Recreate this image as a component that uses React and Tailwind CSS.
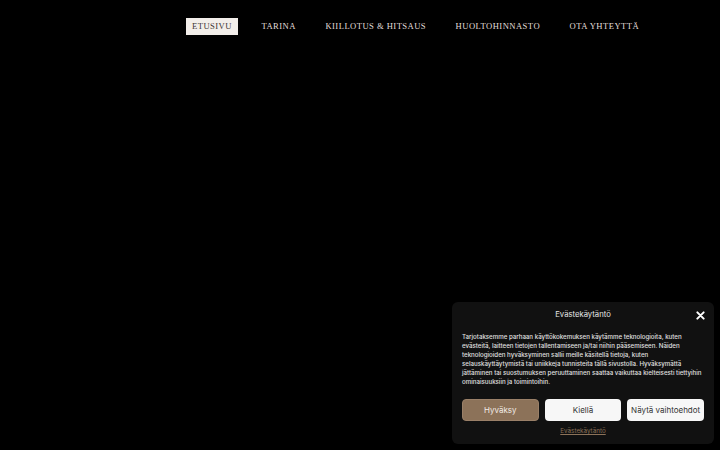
import React from "react";

export default function App() {
  const items = ["TARINA", "KIILLOTUS & HITSAUS", "HUOLTOHINNASTO", "OTA YHTEYTTÄ"];
  return (
    <div className="relative w-[720px] h-[450px] bg-black overflow-hidden">
      <nav className="flex items-center pl-[186px] pt-[18px] gap-[17.5px] whitespace-nowrap">
        <div className="h-[17px] px-[6px] flex items-center bg-[#f2eeea] text-[#3a3330] text-[8.6px] tracking-[0.45px] font-['Liberation_Serif',serif]">
          ETUSIVU
        </div>
        {items.map((t) => (
          <div key={t} className="px-[6px] h-[17px] flex items-center text-[#e2deda] text-[8.6px] tracking-[0.45px] font-['Liberation_Serif',serif]">
            {t}
          </div>
        ))}
      </nav>

      <div className="absolute right-[6px] bottom-[6px] w-[262px] bg-[#111111] rounded-[6px] px-[10px] pt-[7px] pb-[8px] font-['Inter',sans-serif]">
        <div className="relative flex items-center justify-center h-[12px]">
          <span className="text-[#e6e6e6] text-[7.7px] leading-[12px]">Evästekäytäntö</span>
          <svg className="absolute right-[-1px] top-[1.5px]" width="9" height="9" viewBox="0 0 10 10">
            <path d="M1.5 1.5 L8.5 8.5 M8.5 1.5 L1.5 8.5" stroke="#ffffff" strokeWidth="2.2" strokeLinecap="round" />
          </svg>
        </div>
        <p className="mt-[11px] text-[#e0e0e0] text-[6.15px] leading-[9px] font-medium">
          Tarjotaksemme parhaan käyttökokemuksen käytämme teknologioita, kuten evästeitä, laitteen tietojen tallentamiseen ja/tai niihin pääsemiseen. Näiden teknologioiden hyväksyminen sallii meille käsitellä tietoja, kuten selauskäyttäytymistä tai uniikkeja tunnisteita tällä sivustolla. Hyväksymättä jättäminen tai suostumuksen peruuttaminen saattaa vaikuttaa kielteisesti tiettyihin ominaisuuksiin ja toimintoihin.
        </p>
        <div className="mt-[13px] grid grid-cols-3 gap-[6px]">
          <button className="h-[22px] rounded-[4px] bg-[#8c7259] border border-[#9a8068] text-[#f2ece6] text-[8px]">Hyväksy</button>
          <button className="h-[22px] rounded-[4px] bg-[#f7f7f7] text-[#333] text-[8px]">Kiellä</button>
          <button className="h-[22px] rounded-[4px] bg-[#f7f7f7] text-[#333] text-[8px]">Näytä vaihtoehdot</button>
        </div>
        <div className="mt-[6px] text-center leading-[9px] text-[6.3px]">
          <span className="text-[#8c7259] underline">Evästekäytäntö</span>
        </div>
      </div>
    </div>
  );
}
